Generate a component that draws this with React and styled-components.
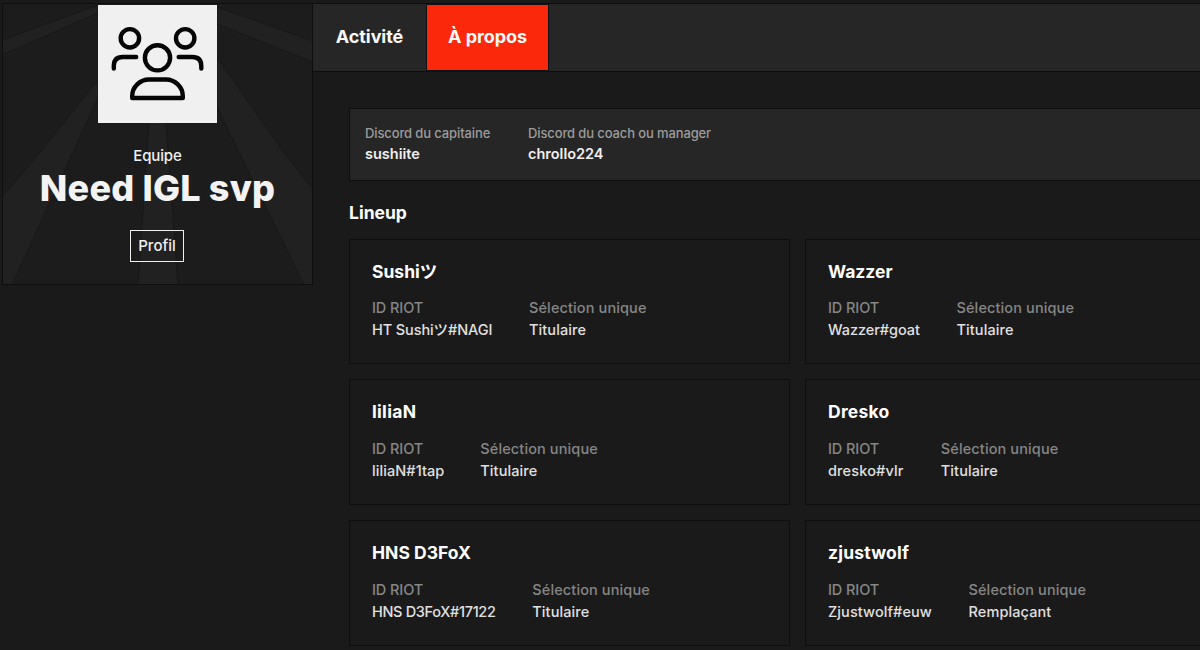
import React from 'react';
import styled, { createGlobalStyle } from 'styled-components';

const GlobalStyle = createGlobalStyle`
  * {
    box-sizing: border-box;
  }
  body {
    margin: 0;
    background: #1a1a1a;
    color: #fff;
    font-family: Inter, 'Noto Sans CJK JP', sans-serif;
    font-size: 15px;
    overflow: hidden;
  }
  h1, h2, h3, p {
    margin: 0;
  }
`;

const Page = styled.div`
  display: flex;
  align-items: flex-start;
  height: 650px;
  padding: 3px 0 0 2px;
  overflow: hidden;
`;

const Sidebar = styled.aside`
  position: relative;
  display: flex;
  flex-direction: column;
  align-items: center;
  flex: none;
  width: 311px;
  height: 282px;
  border: 1px solid #0e0e0e;
  background: #1c1c1c;
`;
const Rays = styled.svg`
  position: absolute;
  top: 0;
  left: 0;
  fill: #212121;
  stroke: #181818;
`;
const Avatar = styled.div`
  position: relative;
  width: 119px;
  height: 118px;
  margin-top: 1px;
  background: #f0f0f0;
  svg {
    display: block;
    fill: none;
    stroke: #050505;
    stroke-width: 4.4;
    stroke-linecap: round;
    stroke-linejoin: round;
  }
`;
const Kind = styled.p`
  position: relative;
  margin-top: 23px;
  line-height: 20px;
  font-weight: 500;
  color: #f0f0f0;
  letter-spacing: -0.15px;
`;
const TeamName = styled.h1`
  position: relative;
  margin-top: 2px;
  line-height: 40px;
  font-size: 36px;
  font-weight: 800;
  color: #f3f3f3;
  white-space: nowrap;
  letter-spacing: 0.2px;
`;
const ProfileButton = styled.button`
  position: relative;
  width: 54px;
  height: 32px;
  margin: 22px 1px 0 0;
  padding: 0;
  border: 1px solid #f0f0f0;
  background: transparent;
  color: #f0f0f0;
  font: 500 15px/28px Inter, sans-serif;
`;

const Main = styled.main`
  flex: 1;
  min-width: 0;
`;
const Tabs = styled.nav`
  display: flex;
  height: 69px;
  border-top: 1px solid #0e0e0e;
  border-bottom: 1px solid #0e0e0e;
  background: #262626;
`;
const Tab = styled.a`
  display: flex;
  align-items: center;
  justify-content: center;
  width: ${(props) => props.$width}px;
  padding-bottom: 2px;
  font-size: 18px;
  font-weight: 700;
  color: #fafafa;
  letter-spacing: -0.08px;
  ${(props) =>
    props.$active &&
    `
    background: #fb280c;
    border: 1px solid #111;
  `}
`;
const Content = styled.div`
  width: 897px;
  padding: 36px 0 0 36px;
`;
const Contacts = styled.section`
  display: flex;
  width: 900px;
  height: 73px;
  padding: 15px;
  border: 1px solid #0e0e0e;
  background: #262626;
`;
const Contact = styled.div`
  flex: none;
  width: ${(props) => props.$width}px;
`;
const ContactLabel = styled.p`
  line-height: 18px;
  font-size: 13px;
  font-weight: 500;
  color: #9c9c9c;
  white-space: nowrap;
  letter-spacing: -0.12px;
`;
const ContactValue = styled.p`
  margin-top: 2px;
  line-height: 20px;
  font-weight: 600;
  font-size: 14.5px;
  color: #f0f0f0;
  white-space: nowrap;
`;
const SectionTitle = styled.h2`
  margin-top: 20px;
  line-height: 24px;
  font-size: 17.5px;
  font-weight: 700;
`;
const Lineup = styled.section`
  display: grid;
  grid-template-columns: 441px 441px;
  grid-auto-rows: 125.6px;
  gap: 15px;
  margin-top: 13.8px;
`;
const Card = styled.article`
  padding: 21px 22px;
  border: 1px solid #0e0e0e;
`;
const PlayerName = styled.h3`
  line-height: 22px;
  font-size: 17.5px;
  font-weight: 700;
  white-space: nowrap;
  letter-spacing: ${(props) => props.$track || 0}px;
`;
const Fields = styled.div`
  display: flex;
  margin-top: 14.6px;
`;
const Field = styled.div`
  flex: none;
  width: ${(props) => props.$width || 160}px;
`;
const Label = styled.p`
  line-height: 22px;
  font-size: 14.5px;
  font-weight: 500;
  color: #868686;
  letter-spacing: ${(props) => props.$track || 0}px;
`;
const Value = styled.p`
  line-height: 22px;
  font-size: 14.5px;
  font-weight: 500;
  color: #e0e0e0;
  white-space: nowrap;
  letter-spacing: ${(props) => props.$track || 0}px;
`;

const players = [
  { name: 'Sushiツ', riotId: 'HT Sushiツ#NAGI', role: 'Titulaire', idWidth: 157, idTrack: -0.1 },
  { name: 'Wazzer', riotId: 'Wazzer#goat', role: 'Titulaire', idWidth: 128.5, idTrack: -0.05 },
  { name: 'liliaN', riotId: 'liliaN#1tap', role: 'Titulaire', idWidth: 108.3, nameTrack: 0.3, idTrack: 0.08 },
  { name: 'Dresko', riotId: 'dresko#vlr', role: 'Titulaire', idWidth: 112.8, nameTrack: 0.25, idTrack: 0.15 },
  { name: 'HNS D3FoX', riotId: 'HNS D3FoX#17122', role: 'Titulaire', idWidth: 160.3, idTrack: -0.33 },
  { name: 'zjustwolf', riotId: 'Zjustwolf#euw', role: 'Remplaçant', idWidth: 140.5, nameTrack: 0.2, idTrack: 0.08 },
];

function Background() {
  return (
    <Rays width="309" height="280" viewBox="3 4 309 280">
      <path d="M2 40 98 5V13L2 55Z" />
      <path d="M217 7 313 41V62L217 24Z" />
      <path d="M98 80 42 150 2 197V285H12L98 98Z" />
      <path d="M217 57 282 150 313 189V285H304L217 107Z" />
      <path d="M149 122H166L178 285H138Z" />
    </Rays>
  );
}

function TeamIcon() {
  return (
    <svg width="119" height="118" viewBox="98 5 119 118">
      <circle cx="129.9" cy="38.3" r="9.2" />
      <circle cx="185.2" cy="38.3" r="9.2" />
      <circle cx="157.5" cy="57.8" r="12.6" />
      <path d="M113.8 68.5V66Q113.8 57 122.8 57H136.2" />
      <path d="M201.3 68.5V66Q201.3 57 192.3 57H178.7" />
      <path d="M132.2 98V96C132.2 87 140 79.5 149 79.5H166C175 79.5 182.8 87 182.8 96V98Z" />
    </svg>
  );
}

function PlayerCard({ player }) {
  return (
    <Card>
      <PlayerName $track={player.nameTrack}>{player.name}</PlayerName>
      <Fields>
        <Field $width={player.idWidth}>
          <Label $track={-0.1}>ID RIOT</Label>
          <Value $track={player.idTrack}>{player.riotId}</Value>
        </Field>
        <Field>
          <Label $track={0.12}>Sélection unique</Label>
          <Value $track={0.1}>{player.role}</Value>
        </Field>
      </Fields>
    </Card>
  );
}

export default function App() {
  return (
    <>
      <GlobalStyle />
      <Page>
        <Sidebar>
          <Background />
          <Avatar>
            <TeamIcon />
          </Avatar>
          <Kind>Equipe</Kind>
          <TeamName>Need IGL svp</TeamName>
          <ProfileButton type="button">Profil</ProfileButton>
        </Sidebar>
        <Main>
          <Tabs>
            <Tab $width={113}>Activité</Tab>
            <Tab $width={123} $active>
              À propos
            </Tab>
          </Tabs>
          <Content>
            <Contacts>
              <Contact $width={163}>
                <ContactLabel>Discord du capitaine</ContactLabel>
                <ContactValue>sushiite</ContactValue>
              </Contact>
              <Contact $width={200}>
                <ContactLabel>Discord du coach ou manager</ContactLabel>
                <ContactValue>chrollo224</ContactValue>
              </Contact>
            </Contacts>
            <SectionTitle>Lineup</SectionTitle>
            <Lineup>
              {players.map((player) => (
                <PlayerCard key={player.name} player={player} />
              ))}
            </Lineup>
          </Content>
        </Main>
      </Page>
    </>
  );
}
